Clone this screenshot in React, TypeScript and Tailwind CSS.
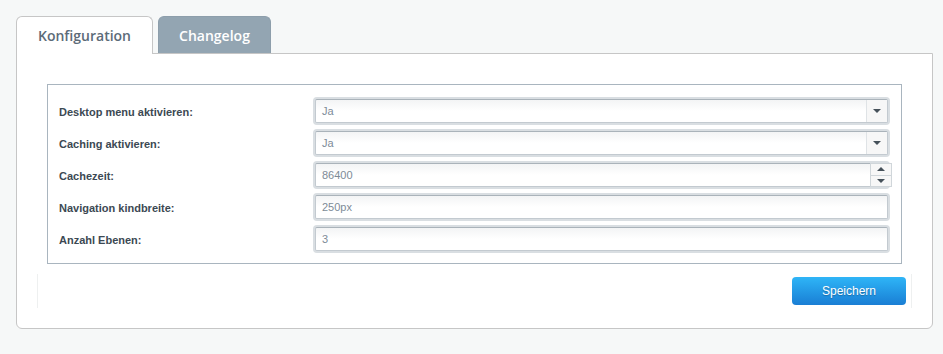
import { useState } from "react";

type Field = {
  label: string;
  value: string;
  kind: "select" | "number" | "text";
};

const FIELDS: Field[] = [
  { label: "Desktop menu aktivieren:", value: "Ja", kind: "select" },
  { label: "Caching aktivieren:", value: "Ja", kind: "select" },
  { label: "Cachezeit:", value: "86400", kind: "number" },
  { label: "Navigation kindbreite:", value: "250px", kind: "text" },
  { label: "Anzahl Ebenen:", value: "3", kind: "text" },
];

function Caret({ up = false }: { up?: boolean }) {
  return (
    <svg width="8" height="4" viewBox="0 0 8 4" className={up ? "rotate-180" : ""}>
      <path d="M0 0h8L4 4z" fill="#46515a" />
    </svg>
  );
}

function Input({ field }: { field: Field }) {
  return (
    <div className="relative flex-1 h-[28px] rounded-[4px] bg-[#d9dee2] p-[2px]">
      <div className="flex h-full items-stretch rounded-[2px] border border-[#c3cad0] border-t-[#aab3ba] bg-gradient-to-b from-[#f3f4f5] via-white to-white">
        <span className="flex-1 pl-[6px] pt-[5px] text-[11px] leading-[13px] text-[#7d8b97]">{field.value}</span>
        {field.kind === "select" && (
          <span className="flex w-[21px] items-center justify-center border-l border-[#dfe3e6] bg-[#f7f7f7]">
            <Caret />
          </span>
        )}
      </div>
      {field.kind === "number" && (
        <span className="absolute right-[-2px] top-[2px] flex h-[24px] w-[22px] flex-col border border-[#d0d6da] bg-[#f7f7f7]">
          <span className="flex flex-1 items-center justify-center border-b border-[#d0d6da]">
            <Caret up />
          </span>
          <span className="flex flex-1 items-center justify-center">
            <Caret />
          </span>
        </span>
      )}
    </div>
  );
}

export default function App() {
  const [tab, setTab] = useState<"config" | "log">("config");

  return (
    <div className="h-[354px] w-full bg-[#f6f8f8] px-4 pt-4 font-['Liberation_Sans',Arial,sans-serif]">
      {/* Tabs */}
      <div className="flex gap-[5px] font-['Open_Sans',sans-serif]">
        <button
          onClick={() => setTab("config")}
          className="relative z-10 -mb-px h-[38px] w-[137px] rounded-t-[6px] border border-b-0 border-[#c6c6c6] bg-white text-[14px] font-semibold text-[#5c6b78]"
        >
          Konfiguration
        </button>
        <button
          onClick={() => setTab("log")}
          className="h-[37px] w-[113px] rounded-t-[6px] border border-b-0 border-[#8d9eab] bg-[#93a5b2] text-[14px] font-semibold text-white"
        >
          Changelog
        </button>
      </div>

      {/* Panel */}
      <div className="h-[276px] w-[917px] rounded-b-[6px] border border-[#c6c6c6] bg-white px-[30px] pt-[30px]">
        {tab === "config" && (
          <>
            <div className="h-[180px] border border-[#a9b5bf] px-[11px] pt-[12px]">
              {FIELDS.map((f) => (
                <div key={f.label} className="flex h-[32px] items-start">
                  <label className="w-[254px] pt-[9px] text-[11px] font-bold leading-[13px] text-[#3c4953]">
                    {f.label}
                  </label>
                  <Input field={f} />
                </div>
              ))}
            </div>

            {/* Footer */}
            <div className="mx-[-10px] mt-[10px] flex h-[34px] items-start justify-end border-x border-[#eef0f0] pt-[3px] pr-[5px]">
              <button className="h-[28px] w-[114px] rounded-[4px] bg-gradient-to-b from-[#2fb5f7] to-[#1a7ed4] text-[12px] text-white [text-shadow:0_1px_1px_rgba(0,0,0,0.25)]">
                Speichern
              </button>
            </div>
          </>
        )}
      </div>
    </div>
  );
}
